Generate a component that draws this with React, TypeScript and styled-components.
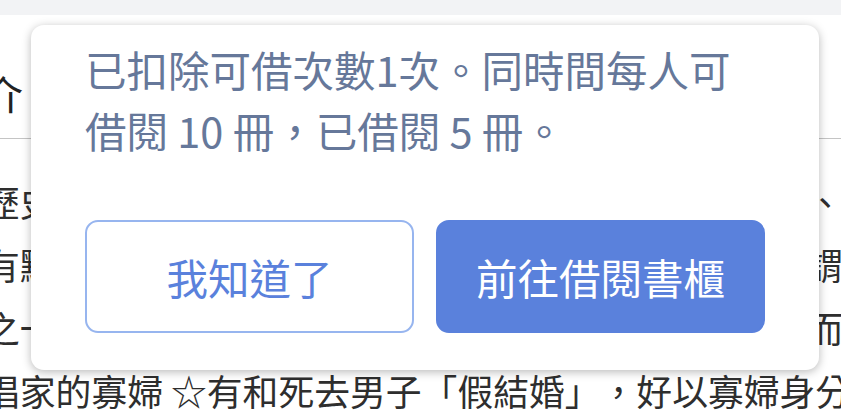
import styled, { createGlobalStyle } from "styled-components";

const GlobalStyle = createGlobalStyle`
  html, body {
    margin: 0;
    padding: 0;
    background: #ffffff;
    overflow: hidden;
  }
  body {
    font-family: "Noto Sans CJK TC", "Noto Sans", sans-serif;
    text-spacing-trim: space-all;
  }
`;

const Screen = styled.div`
  position: relative;
  width: 841px;
  height: 410px;
  overflow: hidden;
  background: #ffffff;
`;

const TopBar = styled.div`
  height: 15px;
  background: #f2f3f5;
`;

const Heading = styled.div`
  padding: 48px 0 15px;
  border-bottom: 1px solid #c4c4c4;
  font-size: 40px;
  line-height: 60px;
  color: #222;
  white-space: nowrap;
`;

const HeadingText = styled.span`
  display: inline-block;
  margin-left: -57px;
`;

const Body = styled.div`
  margin: 31px 0 0 -16px;
  font-size: 35.8px;
  line-height: 63px;
  color: #2e2e2e;
`;

const Row = styled.div`
  white-space: nowrap;
  overflow: hidden;
`;

const Dialog = styled.div`
  position: absolute;
  left: 31px;
  top: 25px;
  width: 788px;
  height: 345px;
  box-sizing: border-box;
  padding: 14px 54px 37px;
  background: #ffffff;
  border-radius: 13px;
  box-shadow: 0 2px 10px rgba(0, 0, 0, 0.28);
  display: flex;
  flex-direction: column;
`;

const Message = styled.p`
  margin: 0;
  font-size: 41.5px;
  line-height: 61px;
  color: #66789a;
`;

const Actions = styled.div`
  margin-top: auto;
  display: grid;
  grid-template-columns: 1fr 1fr;
  gap: 22px;
`;

const Button = styled.button<{ $primary?: boolean }>`
  height: 113px;
  box-sizing: border-box;
  border-radius: 13px;
  font-family: inherit;
  font-size: 41.5px;
  cursor: pointer;
  border: 2px solid ${(p) => (p.$primary ? "#5a81dc" : "#97b5ef")};
  background: ${(p) => (p.$primary ? "#5a81dc" : "#ffffff")};
  color: ${(p) => (p.$primary ? "#ffffff" : "#5a81dc")};
`;

const rows = [
  "歷史小說，描寫明代社會底層女性的生活處境與命運、",
  "有點像是女性版的水滸傳書中人物各有所求也各有所謂",
  "之一是描寫一群被社會遺棄的女子如何在亂世求生存而活",
  "唱家的寡婦 ☆有和死去男子「假結婚」，好以寡婦身分",
];

export default function App() {
  return (
    <Screen>
      <GlobalStyle />
      <TopBar />
      <Heading>
        <HeadingText>簡介</HeadingText>
      </Heading>
      <Body>
        {rows.map((r) => (
          <Row key={r}>{r}</Row>
        ))}
      </Body>
      <Dialog>
        <Message>
          已扣除可借次數1次。同時間每人可借閱 10 冊，已借閱 5 冊。
        </Message>
        <Actions>
          <Button>我知道了</Button>
          <Button $primary>前往借閱書櫃</Button>
        </Actions>
      </Dialog>
    </Screen>
  );
}
